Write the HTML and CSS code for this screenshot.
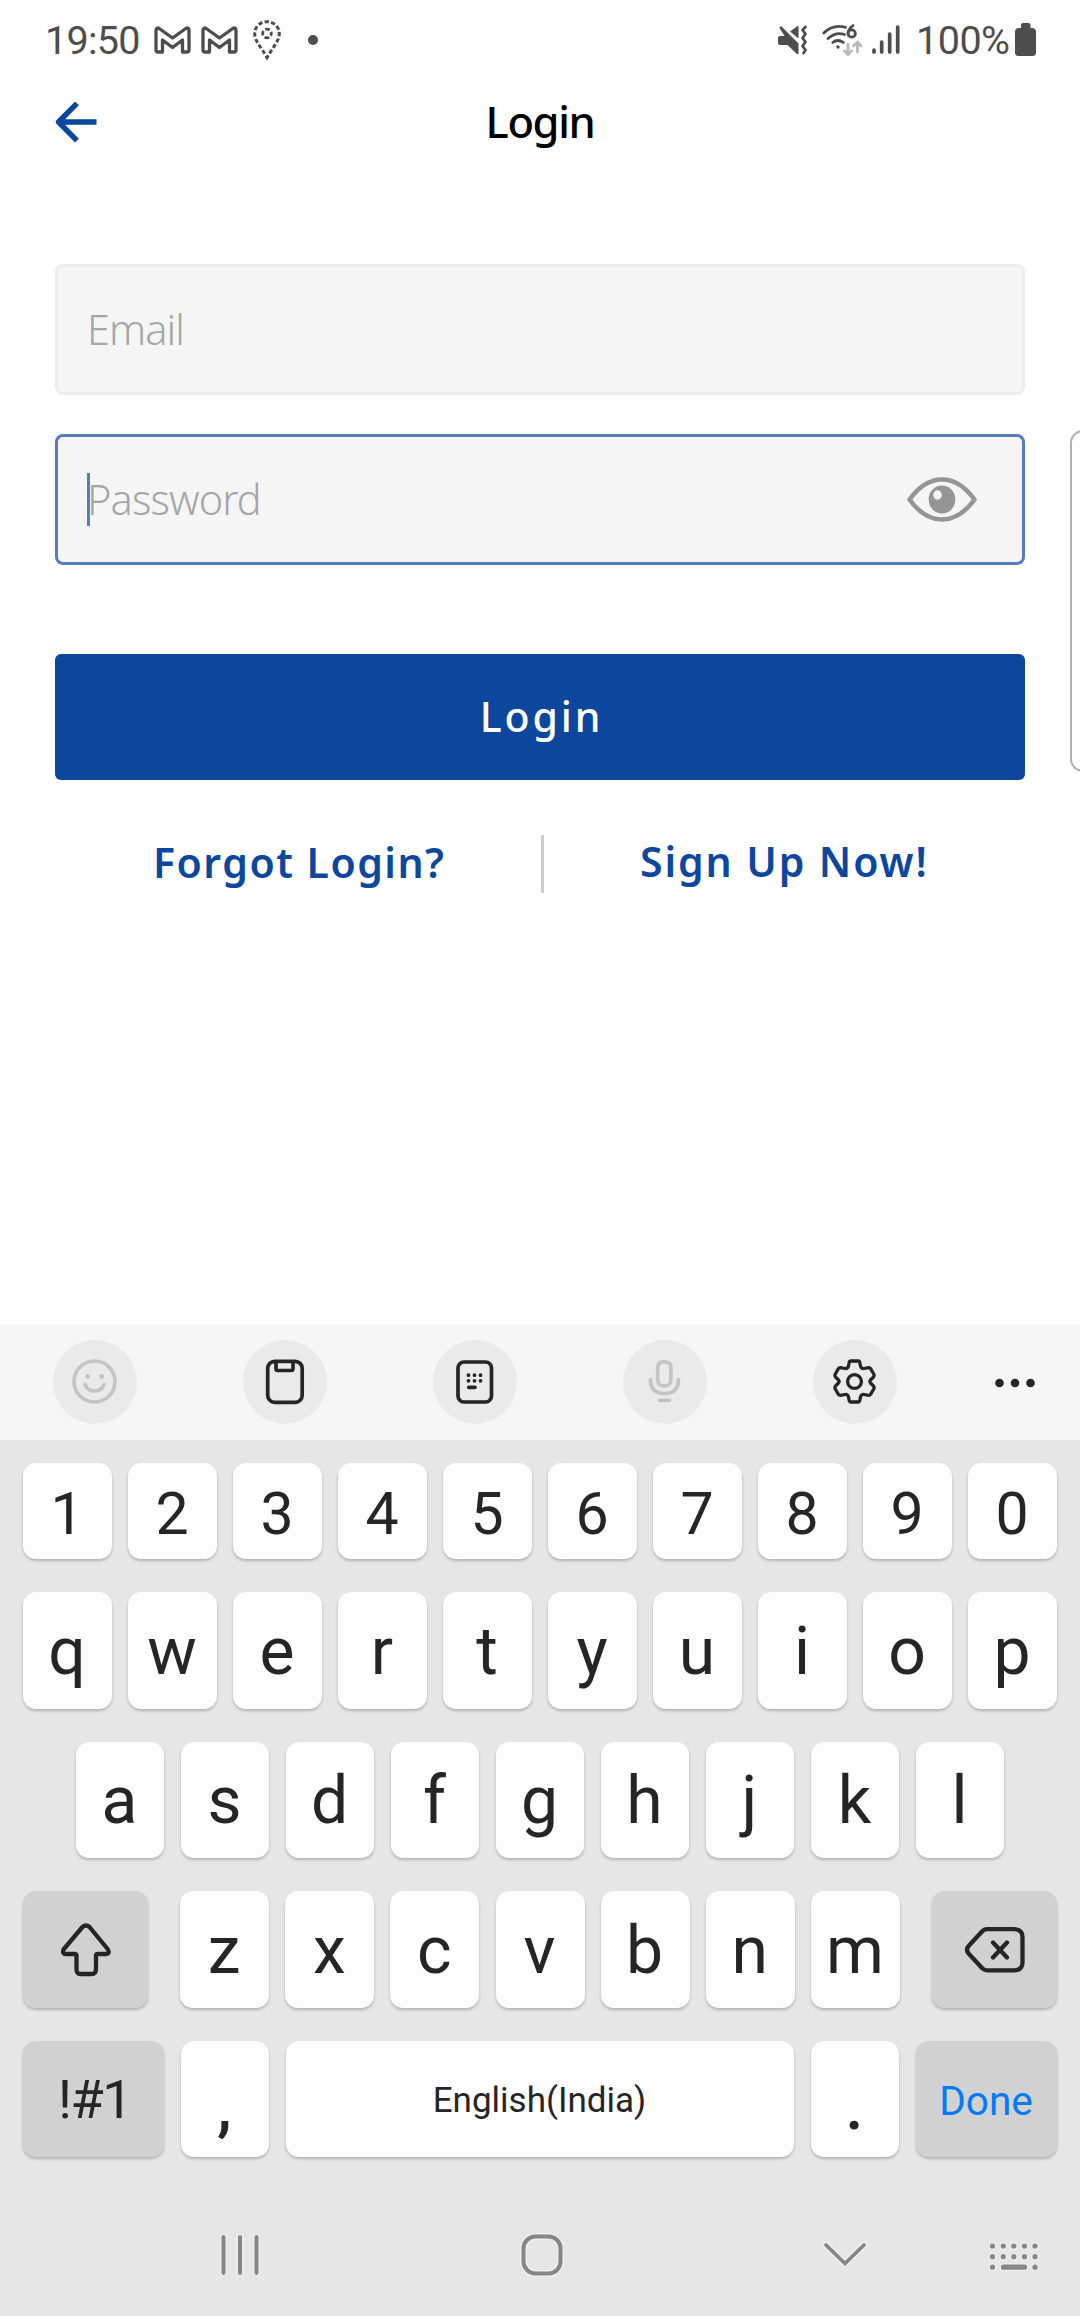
FILE: index.html
```html
<!DOCTYPE html>
<html lang="en">
<head>
<meta charset="utf-8">
<title>Login</title>
<link rel="stylesheet" href="styles.css">
</head>
<body>
<div class="screen">
  <header class="status">
    <div class="status-left">
      <span class="clock">19:50</span>
      <svg class="gmail" width="37" height="28" viewBox="0 0 37 28" fill="none" stroke="#4d4d4d" stroke-width="3.3" stroke-linejoin="round"><path d="M2 4.5Q2 2 4.5 2L18.500 12L32.500 2Q35 2 35 4.500V24Q35 26 33 26H28.500V14L18.500 21.500L8.500 14V26H4Q2 26 2 24Z"/></svg>
      <svg class="gmail" width="37" height="28" viewBox="0 0 37 28" fill="none" stroke="#4d4d4d" stroke-width="3.3" stroke-linejoin="round"><path d="M2 4.5Q2 2 4.5 2L18.500 12L32.500 2Q35 2 35 4.500V24Q35 26 33 26H28.500V14L18.500 21.500L8.500 14V26H4Q2 26 2 24Z"/></svg>
      <svg class="pin" width="28" height="40" viewBox="0 0 28 40" fill="none" stroke="#4d4d4d"><path d="M14 1.700C7 1.700 1.700 7 1.700 13.500C1.700 21 8 27 14 37.500C20 27 26.300 21 26.300 13.500C26.300 7 21 1.700 14 1.700Z" stroke-width="3" stroke-dasharray="4.300 2.300" stroke-dashoffset="2"/><circle cx="14" cy="13.500" r="4.300" stroke-width="2.800" stroke-dasharray="4.700 2.050" stroke-dashoffset="2.350"/><circle cx="14" cy="37.500" r="1.200" fill="#4d4d4d"/></svg>
      <i class="more-dot"></i>
    </div>
    <div class="status-right">
      <svg width="30" height="30" viewBox="0 0 30 30" fill="#4d4d4d"><path d="M0 13Q0 11 2 11H6.500L1.500 3Q1 1 3.500 1.500L20.500 18.500V29H19L9.500 20H2Q0 20 0 18Z"/><path d="M12 6.500L20.500 .5V13.500Z"/><path d="M27.500 2L24.500 5L27.500 9L24.500 13L27.500 17L24.500 21L27.500 25L25.500 28" fill="none" stroke="#4d4d4d" stroke-width="2.800" stroke-linecap="round" stroke-linejoin="round"/></svg>
      <svg class="wifi" width="42" height="32" viewBox="0 0 42 32" fill="none" stroke="#4d4d4d" stroke-width="2.800" stroke-linecap="round"><path d="M1.800 9Q11 0 23.500 3.300M6 14.500Q14 7.500 22.500 10.500M10.700 18.500Q16 14.500 21.300 18.500"/><circle cx="16" cy="23" r="1.700" fill="#4d4d4d" stroke="none"/><circle cx="29.700" cy="9.500" r="3.700"/><path d="M26 9Q26.500 5 31 1.500"/><path d="M26 20.500V30M22.500 27L26 30.500L29.500 27M35.500 28V18.500M31.500 22L35.500 18L39 22" stroke="#b9b9b9"/></svg>
      <svg class="signal" width="28" height="30" viewBox="0 0 28 30" fill="none" stroke="#4d4d4d" stroke-width="3.700" stroke-linecap="round"><path d="M2 25V27M9.700 17V27M17.700 9V27M25.700 2V27"/></svg>
      <span class="percent">100%</span>
      <svg width="21" height="34" viewBox="0 0 21 34" fill="#4d4d4d"><path d="M6 5V2Q6 0 8 0H13.500Q15.500 0 15.500 2V5H17Q21 5 21 9V29.500Q21 33 17.500 33H3.500Q0 33 0 29.500V9Q0 5 4 5Z"/></svg>
    </div>
  </header>

  <nav class="app-bar">
    <svg class="back" width="42" height="42" viewBox="0 0 42 42" fill="none" stroke="#0d479d" stroke-width="5.400" stroke-linejoin="round"><path d="M22 2.300L3.500 21L22 39.700M5 21H41.500"/></svg>
    <h1>Login</h1>
  </nav>

  <main class="form">
    <div class="field"><span class="placeholder email">Email</span></div>
    <div class="field focused">
      <i class="caret"></i><span class="placeholder pass">Password</span>
      <svg class="eye" width="70" height="46" viewBox="0 0 70 46"><path d="M2.500 22.500Q17 2.500 35 2.500T67.500 22.500Q53 42.500 35 42.500T2.500 22.500Z" fill="none" stroke="#959595" stroke-width="4.500" stroke-linejoin="round"/><ellipse cx="35" cy="22.500" rx="13.300" ry="14" fill="#959595"/><ellipse cx="30.500" cy="18" rx="4.300" ry="4.700" fill="#f5f5f5"/></svg>
    </div>
    <div class="login">Login</div>
    <div class="links"><div class="link forgot"><span>Forgot Login?</span></div><i class="divider"></i><div class="link signup"><span>Sign Up Now!</span></div></div>
  </main>
  <i class="edge-panel"></i>

  <section class="keyboard">
    <div class="tools">
      <div class="tool"><svg width="46" height="46" viewBox="0 0 46 46" fill="none" stroke="#c4c4c4" stroke-width="3.600" stroke-linecap="round"><circle cx="22.500" cy="22.500" r="20.500"/><path d="M13 25.500Q15.500 32 22.500 32T32 25.500"/><circle cx="15.500" cy="17.500" r="2.400" fill="#c4c4c4" stroke="none"/><circle cx="29.500" cy="17.500" r="2.400" fill="#c4c4c4" stroke="none"/></svg></div>
      <div class="tool"><svg width="46" height="46" viewBox="0 0 46 46" fill="none" stroke="#252525" stroke-width="3.700" stroke-linejoin="round"><rect x="5.700" y="2.300" width="34.500" height="41" rx="7"/><path d="M14 2.300V9.500Q14 11.500 16 11.500H29Q31 11.500 31 9.500V2.300"/></svg></div>
      <div class="tool"><svg width="46" height="46" viewBox="0 0 46 46" fill="none" stroke="#252525" stroke-width="3.700" stroke-linecap="round"><rect x="6" y="3" width="33.500" height="40" rx="6"/><path d="M16.500 16.200h0M22.500 16.200h0M28.500 16.200h0M16.500 21.800h0M22.500 21.800h0M28.500 21.800h0M16.800 28.300H23" stroke-width="3.800"/></svg></div>
      <div class="tool"><svg width="46" height="46" viewBox="0 0 46 46" fill="none" stroke="#c4c4c4" stroke-width="3.700" stroke-linecap="round"><rect x="15.700" y="2.800" width="13.200" height="24" rx="5.500"/><path d="M8.500 20.500Q8.500 34.500 22.500 34.500T36.500 20.500M17.500 41.300H27.500"/></svg></div>
      <div class="tool"><svg width="46" height="46" viewBox="0 0 46 46" fill="none" stroke="#252525" stroke-width="3.300" stroke-linejoin="round"><circle cx="22.500" cy="22.500" r="6.900"/><path d="M18.800 2H26.200Q27.500 2 27.800 3.500L28.500 7Q29.500 10 32 9.500L36.500 8.700Q38 8.700 38.600 9.700L42 15.500Q42.500 17 41.500 18L38.500 21Q37.300 22.500 38.500 24L41.500 27Q42.500 28 42 29.500L38.600 35.300Q38 36.300 36.500 36.300L32 35.500Q29.500 35 28.500 38L27.800 41.500Q27.500 43 26.200 43H18.800Q17.500 43 17.200 41.500L16.500 38Q15.500 35 13 35.500L8.500 36.300Q7 36.300 6.400 35.300L3 29.500Q2.500 28 3.500 27L6.500 24Q7.700 22.500 6.500 21L3.500 18Q2.500 17 3 15.500L6.400 9.700Q7 8.700 8.500 8.700L13 9.500Q15.500 10 16.500 7L17.200 3.500Q17.500 2 18.800 2Z"/></svg></div>
      <svg class="overflow" width="40" height="10" viewBox="0 0 40 10" fill="#252525"><circle cx="4.500" cy="5" r="4.300"/><circle cx="20" cy="5" r="4.300"/><circle cx="35.500" cy="5" r="4.300"/></svg>
    </div>
    <div class="keys">
      <div class="row numbers"><b>1</b><b>2</b><b>3</b><b>4</b><b>5</b><b>6</b><b>7</b><b>8</b><b>9</b><b>0</b></div>
      <div class="row top"><b>q</b><b>w</b><b>e</b><b>r</b><b>t</b><b>y</b><b>u</b><b>i</b><b>o</b><b>p</b></div>
      <div class="row home-row"><b>a</b><b>s</b><b>d</b><b>f</b><b>g</b><b>h</b><b>j</b><b>k</b><b>l</b></div>
      <div class="row bottom">
        <b class="dark shift"><svg width="52" height="54" viewBox="0 0 52 54" fill="none" stroke="#252525" stroke-width="4.300" stroke-linejoin="round"><path d="M22.500 4Q26 1 29.500 4L48 26.500Q50 31 46 31H38Q36 31 36 33V46Q36 51 31.500 51H20.500Q16.500 51 16.500 46V33Q16.500 31 14.500 31H6Q2 31 3.500 26.500Z"/></svg></b>
        <b>z</b><b>x</b><b>c</b><b>v</b><b>b</b><b>n</b><b>m</b>
        <b class="dark delete"><svg width="60" height="46" viewBox="0 0 60 46" fill="none" stroke="#252525" stroke-width="4.300" stroke-linecap="round" stroke-linejoin="round"><path d="M22 2.200H49Q57.500 2.200 57.500 10V35.500Q57.500 43.300 49 43.300H22Q19.500 43.300 17.500 41.500L4 27Q0 22.800 4 18.500L17.500 4Q19.500 2.200 22 2.200ZM28 15.500L42 30.500M42 15.500L28 30.500"/></svg></b>
      </div>
      <div class="row last"><b class="dark symbols">!#1</b><b class="punct">,</b><b class="space">English(India)</b><b class="punct">.</b><b class="dark done">Done</b></div>
    </div>
    <div class="system-nav">
      <svg class="recents" width="42" height="46" viewBox="0 0 42 46" fill="none" stroke-linecap="round"><path d="M4.500 5V41M21 5V41M37.500 5V41" stroke="#efefef" stroke-width="7"/><path d="M4.500 5V41M21 5V41M37.500 5V41" stroke="#868686" stroke-width="4"/></svg>
      <svg class="home" width="46" height="46" viewBox="0 0 46 46" fill="none"><rect x="4.500" y="4.500" width="37" height="37" rx="12" stroke="#efefef" stroke-width="7"/><rect x="4.500" y="4.500" width="37" height="37" rx="12" stroke="#868686" stroke-width="4"/></svg>
      <svg class="hide" width="46" height="30" viewBox="0 0 46 30" fill="none" stroke-linecap="round"><path d="M4 5L23 23.500L42 5" stroke="#efefef" stroke-width="7"/><path d="M4 5L23 23.500L42 5" stroke="#868686" stroke-width="3.700"/></svg>
      <svg class="switcher" width="50" height="30" viewBox="0 0 50 30" fill="none" stroke-linecap="round"><path d="M3.500 4h0M14.300 4h0M24.800 4h0M35.500 4h0M46 4h0M3.500 14.700h0M14.300 14.700h0M24.800 14.700h0M35.500 14.700h0M46 14.700h0M3.500 25.200h0M14.500 25.200H35.500M46 25.200h0" stroke="#efefef" stroke-width="7.500"/><path d="M3.500 4h0M14.300 4h0M24.800 4h0M35.500 4h0M46 4h0M3.500 14.700h0M14.300 14.700h0M24.800 14.700h0M35.500 14.700h0M46 14.700h0M3.500 25.200h0M14.500 25.200H35.500M46 25.200h0" stroke="#868686" stroke-width="5.200"/></svg>
    </div>
  </section>
</div>
</body>
</html>
```
FILE: styles.css
```css
* { box-sizing: border-box; }
body { margin: 0; background: #fefefe; font-family: "Noto Sans", sans-serif; }
svg { display: block; flex: none; overflow: visible; }
.screen { position: relative; width: 1080px; height: 2316px; display: flex; flex-direction: column; overflow: hidden; }

.status { height: 80px; padding: 0 44px 0 45px; display: flex; justify-content: space-between; align-items: center; font: 39.5px/80px Roboto, sans-serif; color: #4d4d4d; }
.status-left, .status-right { display: flex; align-items: center; }
.clock { width: 109px; letter-spacing: -0.7px; padding-top: 1px; }
.gmail { margin-right: 10px; }
.pin { margin-left: 5px; }
.more-dot { width: 10px; height: 10px; border-radius: 50%; background: #4d4d4d; margin-left: 27px; }
.wifi { margin-left: 14px; }
.signal { margin-left: 8px; }
.percent { width: 99px; margin-left: 16px; letter-spacing: -0.5px; padding-top: 1px; }

.app-bar { height: 84px; padding: 0 55px; display: grid; grid-template-columns: 120px 1fr 120px; align-items: center; }
h1 { margin: 0; padding-bottom: 2px; text-align: center; font-size: 43.5px; line-height: 80px; font-weight: 500; color: #000; letter-spacing: -1.4px; }

.form { padding: 100px 55px 0; flex: 1; }
.field { height: 131px; border: 3px solid #ededed; border-radius: 8px; background: #f5f5f5; display: flex; align-items: center; padding: 0 45px 0 29px; margin-bottom: 39px; }
.field.focused { border-color: #537dbb; margin-bottom: 0; }
.placeholder { font-size: 41.5px; font-weight: 300; line-height: 60px; color: #a6a6a6; padding-bottom: 1px; }
.email { letter-spacing: -0.9px; }
.pass { letter-spacing: -0.9px; margin-left: -3px; }
.caret { width: 3px; height: 53px; background: #537dbb; }
.eye { margin-left: auto; }
.login { margin-top: 89px; height: 126px; padding: 0 0 2px 3px; border-radius: 6px; background: #0d479d; color: #fff; display: flex; align-items: center; justify-content: center; font-size: 41px; font-weight: 500; letter-spacing: 2.9px; }
.links { margin-top: 55px; height: 58px; display: grid; grid-template-columns: 486px 3px 1fr; grid-template-rows: 58px; align-items: center; color: #0d479d; font-size: 41px; line-height: 50px; font-weight: 600; letter-spacing: 1.5px; }
.link { display: flex; }
.forgot { padding-left: 98px; padding-bottom: 5px; }
.signup { padding-left: 96px; padding-bottom: 6px; letter-spacing: 1.9px; }
.divider { height: 58px; background: #ccc; }
.edge-panel { position: absolute; left: 1070px; top: 430px; width: 30px; height: 342px; border: 2px solid #b0b0b0; border-radius: 13px; background: #fefefe; }

.keyboard { height: 991px; background: #e6e6e6; font-family: Roboto, sans-serif; color: #252525; }
.tools { height: 115px; background: #f6f6f6; padding: 0 0 1px 53px; display: flex; align-items: center; gap: 106px; }
.tool { width: 84px; height: 84px; border-radius: 50%; background: #eaeaea; display: flex; align-items: center; justify-content: center; }
.overflow { margin-left: -8px; margin-top: 2px; }
.keys { padding: 23px 23px 0; display: flex; flex-direction: column; gap: 33px; }
.row { display: flex; justify-content: space-between; height: 117px; }
.row b { width: 89px; border-radius: 13px; background: #fdfdfd; box-shadow: 0 2px 3px rgba(0, 0, 0, .22); display: flex; align-items: center; justify-content: center; font-size: 66px; line-height: 1; font-weight: 400; padding: 2px 1px 0 0; }
.numbers { height: 96px; }
.row.numbers b { font-size: 59px; padding-top: 4px; }
.home-row { height: 116px; padding: 0 53px; }
.home-row b { width: 88px; }
.row .dark { background: #d1d1d1; }
.row .shift, .row .delete { width: 125px; padding: 0; }
.row .shift { margin-right: 16px; }
.row .delete { margin-left: 16px; }
.last { height: 116px; }
.row .symbols { width: 141px; font-size: 54px; letter-spacing: -1.5px; padding-left: 3px; }
.row .punct { width: 88px; padding-top: 15px; font-weight: 500; }
.row .space { width: 508px; font-size: 35px; }
.row .done { width: 141px; font-size: 40.5px; padding-top: 5px; color: #007aff; }
.system-nav { height: 159px; padding: 36px 42px 0 219px; display: flex; align-items: center; }
.home { margin-left: 258px; }
.hide { margin-left: 257px; }
.switcher { margin-left: 121px; margin-top: 4px; }
```
